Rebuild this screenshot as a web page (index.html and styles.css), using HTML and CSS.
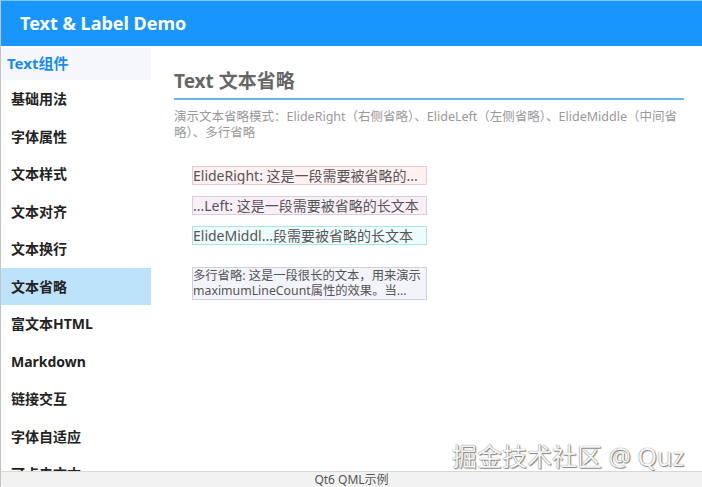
FILE: index.html
```html
<!DOCTYPE html>
<html lang="zh-CN">
<head>
  <meta charset="UTF-8">
  <title>Text &amp; Label Demo</title>
  <link rel="stylesheet" href="styles.css">
</head>
<body>
  <div class="window">
    <header class="topbar">Text &amp; Label Demo</header>

    <div class="body">
      <nav class="sidebar">
        <div class="group">Text组件</div>
        <div class="item">基础用法</div>
        <div class="item">字体属性</div>
        <div class="item">文本样式</div>
        <div class="item">文本对齐</div>
        <div class="item">文本换行</div>
        <div class="item active">文本省略</div>
        <div class="item">富文本HTML</div>
        <div class="item">Markdown</div>
        <div class="item">链接交互</div>
        <div class="item">字体自适应</div>
        <div class="item">可点击文本</div>
      </nav>

      <main class="content">
        <h1 class="title">Text 文本省略</h1>
        <p class="desc">演示文本省略模式：ElideRight（右侧省略）、ElideLeft（左侧省略）、ElideMiddle（中间省略）、多行省略</p>

        <div class="demos">
          <div class="box pink">ElideRight: 这是一段需要被省略的...</div>
          <div class="box lilac">...Left: 这是一段需要被省略的长文本</div>
          <div class="box cyan">ElideMiddl...段需要被省略的长文本</div>
          <div class="box multi">多行省略: 这是一段很长的文本，用来演示<br>maximumLineCount属性的效果。当...</div>
        </div>
      </main>
    </div>

    <footer class="statusbar">Qt6 QML示例</footer>
  </div>

  <div class="watermark">掘金技术社区 @ Quz</div>
</body>
</html>
```

FILE: styles.css
```css
html, body {
  margin: 0;
  padding: 0;
  height: 100%;
  overflow: hidden;
}

body {
  font-family: "Noto Sans", "Noto Sans CJK SC", sans-serif;
  background: #fff;
  color: #333;
}

.window {
  height: 487px;
  display: flex;
  flex-direction: column;
  border-left: 1px solid #c4c4c4;
  box-sizing: border-box;
}

.topbar {
  height: 46px;
  flex: none;
  background-color: #1996fb;
  border-top: 1px solid #7cc6ff;
  box-sizing: border-box;
  color: #fff;
  font-size: 18px;
  font-weight: bold;
  padding-left: 19px;
  line-height: 44px;
}

.body {
  flex: 1;
  display: flex;
  overflow: hidden;
}

.sidebar {
  width: 150px;
  flex: none;
  padding-top: 2px;
}

.group {
  height: 32px;
  line-height: 31px;
  background: #f5f7fa;
  color: #1a8cf0;
  font-weight: bold;
  font-size: 15px;
  padding-left: 6px;
}

.item {
  height: 37.5px;
  line-height: 37.5px;
  padding-left: 10px;
  font-size: 14px;
  font-weight: bold;
  color: #222;
}

.item.active {
  background: #bde3fb;
}

.content {
  flex: 1;
  padding: 0 18px 0 23px;
}

.title {
  margin: 21px 0 0;
  font-size: 19px;
  font-weight: bold;
  color: #666;
  height: 31px;
  line-height: 28px;
  border-bottom: 2px solid #68b4ec;
}

.desc {
  margin: 9px 0 0;
  font-size: 12.5px;
  line-height: 16px;
  color: #999;
}

.demos {
  margin: 25px 0 0 18px;
  width: 235px;
  display: flex;
  flex-direction: column;
  gap: 11px;
}

.box {
  height: 19px;
  box-sizing: border-box;
  font-size: 14px;
  line-height: 17px;
  color: #555;
  border: 1px solid;
  white-space: nowrap;
  overflow: hidden;
}

.pink {
  background: #fff0f2;
  border-color: #f3c9cf;
}

.lilac {
  background: #f9eff9;
  border-color: #dccbdc;
}

.cyan {
  background: #effcfc;
  border-color: #a6e6e6;
}

.multi {
  margin-top: 11px;
  height: 33px;
  font-size: 12.3px;
  line-height: 15px;
  background: #f3f3fb;
  border-color: #cfcfe0;
}

.statusbar {
  height: 15px;
  flex: none;
  background: #f2f2f2;
  border-top: 1px solid #d8d8d8;
  font-size: 12px;
  line-height: 15px;
  text-align: center;
  color: #555;
  border-bottom-left-radius: 4px;
}

.watermark {
  position: absolute;
  left: 452px;
  top: 437px;
  font-size: 25px;
  color: #f6f6f6;
  text-shadow: 0 0 1px #555, 1px 1px 1px #888;
  white-space: nowrap;
}
```
